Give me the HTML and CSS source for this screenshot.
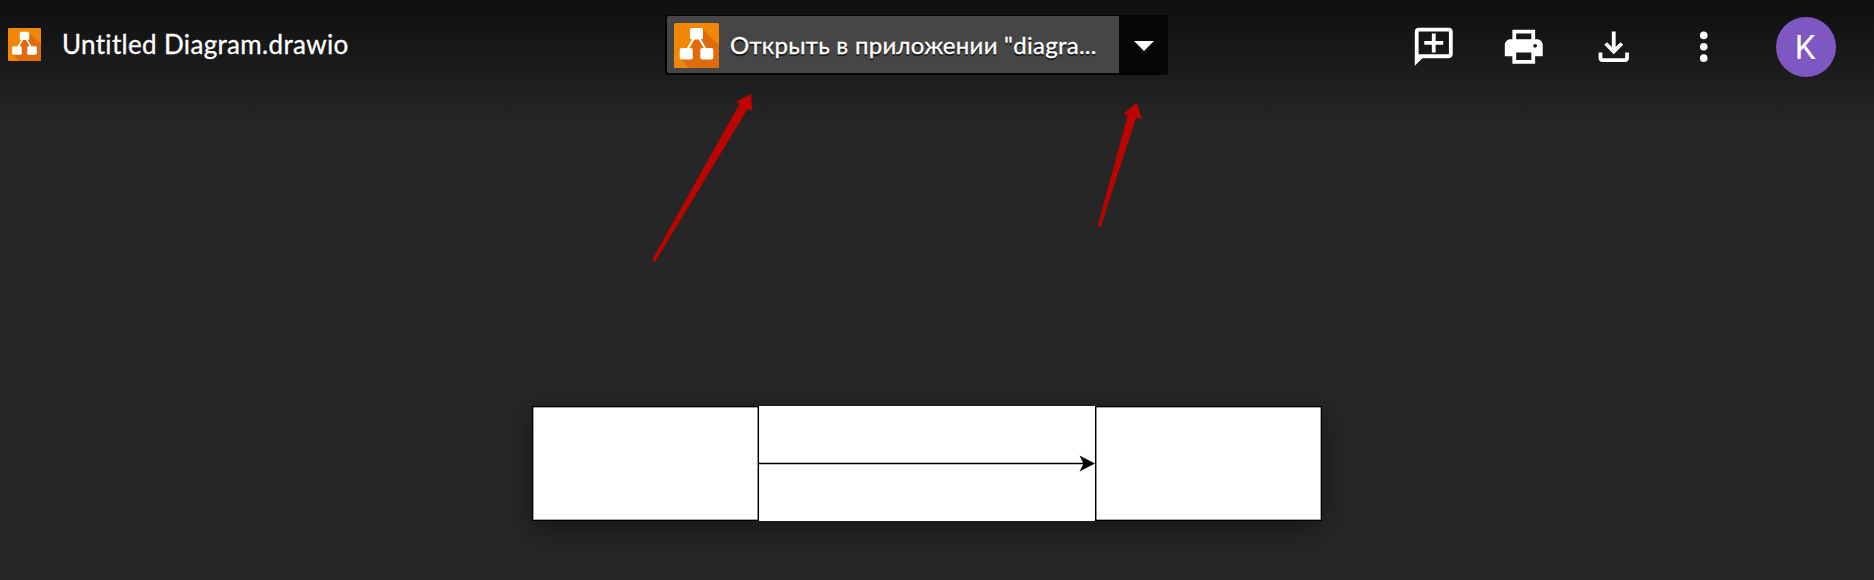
FILE: index.html
```html
<!DOCTYPE html>
<html lang="ru">
<head>
<meta charset="utf-8">
<title>Untitled Diagram.drawio</title>
<link rel="stylesheet" href="styles.css">
</head>
<body>
<svg width="0" height="0" class="defs">
  <symbol id="drawio" viewBox="0 0 45 45">
    <rect width="45" height="45" rx="1.500" fill="#f08705"/>
    <path d="M29 6L45 22.500V43.500Q45 45 43.500 45H15.500L6.500 36L16 27L21 16Z" fill="#df6c0c"/>
    <path d="M20.500 14L13 27M24.500 14L32 27" stroke="#fff" stroke-width="2" fill="none"/>
    <rect x="16" y="5" width="13" height="11.500" rx="2" fill="#fff"/>
    <rect x="5.700" y="25" width="13" height="11.500" rx="2" fill="#fff"/>
    <rect x="26.300" y="25" width="13" height="11.500" rx="2" fill="#fff"/>
  </symbol>
</svg>
<div class="viewer">
  <header class="toolbar">
    <div class="file">
      <svg class="file-icon"><use href="#drawio"/></svg>
      <span class="file-name">Untitled Diagram.drawio</span>
    </div>
    <div class="open-with">
      <button class="open-main">
        <svg class="app-icon"><use href="#drawio"/></svg>
        <span class="open-label">Открыть в приложении "diagra...</span>
      </button>
      <button class="open-more"><svg width="20" height="11" viewBox="0 0 20 11"><path d="M0 0H20L10 10Z" fill="#fff"/></svg></button>
    </div>
    <div class="actions">
      <svg class="action" viewBox="0 0 24 24"><path d="M22 4c0-1.100-.900-2-2-2H4c-1.100 0-2 .900-2 2v18l4-4h14c1.100 0 2-.900 2-2V4zM20 16H4V4h16v12zM11 15h2v-4h4V9h-4V5h-2v4H7v2h4z"/></svg>
      <svg class="action" viewBox="0 0 24 24"><path fill-rule="evenodd" d="M19 8h-1V3H6v5H5c-1.660 0-3 1.340-3 3v6h4v4h12v-4h4v-6c0-1.660-1.340-3-3-3zM8 5h8v3H8V5zM16 19H8v-4h8v4zM18 12.500c-.550 0-1-.450-1-1s.450-1 1-1 1 .450 1 1-.450 1-1 1z"/></svg>
      <svg class="action" viewBox="0 0 24 24"><path d="M4 15h2v3h12v-3h2v3c0 1.100-.900 2-2 2H6c-1.100 0-2-.900-2-2zM17 11l-1.410-1.410L13 12.170V4h-2v8.170L8.410 9.590 7 11l5 5z"/></svg>
      <svg class="action" viewBox="0 0 24 24"><circle cx="12" cy="6" r="2"/><circle cx="12" cy="12" r="2"/><circle cx="12" cy="18" r="2"/></svg>
      <span class="avatar">K</span>
    </div>
  </header>
  <main class="stage">
    <svg class="page" width="790" height="115" viewBox="0 0 790 115">
      <rect width="790" height="115" fill="#fff"/>
      <g fill="none" stroke="#000" stroke-width="1.500">
        <rect x=".6" y=".6" width="225.700" height="113.800"/>
        <rect x="563.700" y=".6" width="225.700" height="113.800"/>
        <path d="M226 57.500H553"/>
      </g>
      <path d="M563 57.500L547.500 65.500L551.500 57.500L547.500 49.500Z"/>
    </svg>
  </main>
  <svg class="pointers" width="1874" height="580" viewBox="0 0 1874 580">
    <path d="M653.300 259.500L740.500 103.500L737.500 101.800L750.600 95L751.300 109.800L747.500 107.700L655 260.500Z"/>
    <path d="M1098.500 226L1128.500 115.500L1125 113.500L1136.300 104L1141 118.200L1135.500 117L1100 226.500Z"/>
  </svg>
</div>
</body>
</html>
```
FILE: styles.css
```css
* { box-sizing: border-box; }
body { margin: 0; background: #262626; font-family: Lato, "Open Sans", sans-serif; font-variant-ligatures: none; color: #fff; }
.defs { display: block; position: absolute; }
.viewer { position: relative; height: 580px; overflow: hidden; background: linear-gradient(#0f0f0f, #262626 128px); }
.toolbar { display: grid; grid-template-columns: 665px 503px 1fr; height: 94px; }
.file { display: flex; align-items: center; height: 89px; padding-left: 8px; gap: 21px; }
.file-icon { width: 33px; height: 33px; }
.file-name { padding-bottom: 2px; font-size: 26px; letter-spacing: .33px; white-space: nowrap; -webkit-text-stroke: .3px #fff; }
.open-with { display: flex; height: 60px; margin-top: 15px; background: #050505; border-radius: 3px; }
.open-with button { border: 0; padding: 0; color: #fff; font: inherit; background: none; }
.open-with .open-main { display: flex; align-items: center; width: 453px; height: 57px; margin: 1px 0 0 2px; padding: 2px 0 0 7px; gap: 11px; background: #464646; border-radius: 2px 0 0 2px; }
.app-icon { width: 45px; height: 45px; flex: none; }
.open-label { padding-bottom: 2px; font-size: 24px; letter-spacing: .26px; white-space: nowrap; text-shadow: 0 2px 1px #111; -webkit-text-stroke: .3px #fff; }
.open-with .open-more { display: flex; align-items: center; justify-content: center; width: 49px; height: 63px; }
.actions { display: flex; align-items: center; height: 94px; padding-left: 243px; gap: 44.500px; }
.action { width: 45.500px; height: 45.500px; fill: #fff; }
.avatar { width: 60px; height: 60px; margin-left: 5px; padding-right: 2px; border-radius: 50%; background: #7e57c2; font: 33px/62px Roboto, sans-serif; text-align: center; }
.stage { display: flex; justify-content: center; padding: 312px 20px 0 0; }
.page { display: block; box-shadow: 0 8px 26px rgba(0, 0, 0, .4); }
.pointers { position: absolute; inset: 0; fill: #bd0400; stroke: #bd0400; stroke-width: 1.500; stroke-linejoin: round; pointer-events: none; }
```
